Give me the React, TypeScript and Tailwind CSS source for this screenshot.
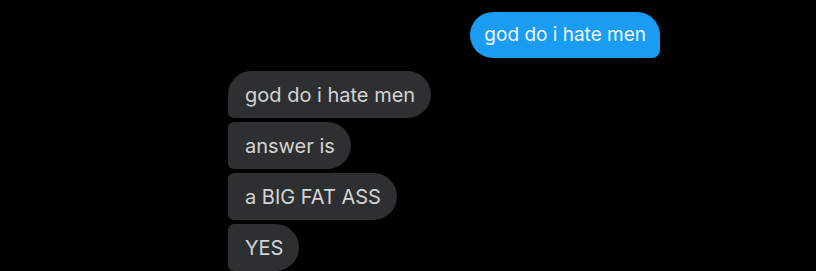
export default function App() {
  const received = ['god do i hate men', 'answer is', 'a BIG FAT ASS', 'YES'];

  return (
    <div className="w-[816px] h-[271px] overflow-hidden bg-black font-['Inter',sans-serif]">
      <div className="flex justify-end pt-[12px] pr-[156px]">
        <div className="h-[46px] px-[14px] flex items-center rounded-[23px] rounded-br-[8px] bg-[#1a9cf3] text-[19px] text-[#eef6fe]">
          god do i hate men
        </div>
      </div>
      <div className="flex flex-col items-start gap-[4px] pt-[13px] pl-[228px]">
        {received.map((msg, i) => (
          <div
            key={i}
            className={
              i === 0
                ? 'h-[47px] pl-[17px] pr-[16px] flex items-center rounded-[24px] rounded-bl-[6px] bg-[#2e2f31] text-[20px] text-[#d4d4d4]'
                : 'h-[47px] pl-[17px] pr-[16px] flex items-center rounded-[24px] rounded-l-[6px] bg-[#2e2f31] text-[20px] text-[#d4d4d4]'
            }
          >
            {msg}
          </div>
        ))}
      </div>
    </div>
  );
}
